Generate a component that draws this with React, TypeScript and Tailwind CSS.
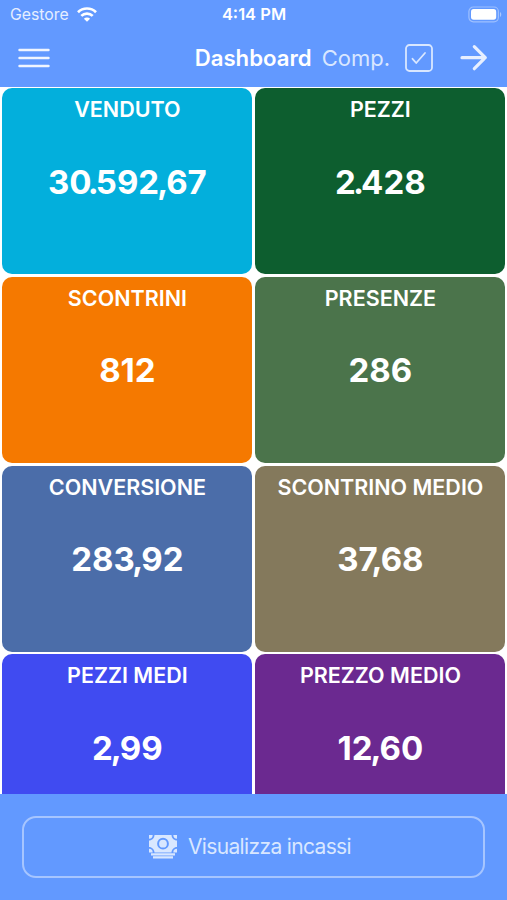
import type { ReactNode } from 'react';

interface Kpi {
  label: string;
  value: string;
  color: string;
}

const kpis: Kpi[] = [
  { label: 'VENDUTO', value: '30.592,67', color: 'bg-[#03afdc]' },
  { label: 'PEZZI', value: '2.428', color: 'bg-[#0d5e2f]' },
  { label: 'SCONTRINI', value: '812', color: 'bg-[#f57900]' },
  { label: 'PRESENZE', value: '286', color: 'bg-[#4b744b]' },
  { label: 'CONVERSIONE', value: '283,92', color: 'bg-[#4b6da9]' },
  { label: 'SCONTRINO MEDIO', value: '37,68', color: 'bg-[#84795c]' },
  { label: 'PEZZI MEDI', value: '2,99', color: 'bg-[#404bf1]' },
  { label: 'PREZZO MEDIO', value: '12,60', color: 'bg-[#6b2990]' },
];

function WifiIcon() {
  return (
    <svg width="20" height="15" viewBox="0 0 20 15" fill="none" stroke="white" strokeWidth="2.7">
      <path d="M1 5.2a12.8 12.8 0 0 1 18 0" />
      <path d="M4.3 8.9a8.1 8.1 0 0 1 11.4 0" />
      <path d="M10 14.8 6.9 11.8a4.4 4.4 0 0 1 6.2 0Z" fill="white" stroke="none" />
    </svg>
  );
}

function BatteryIcon() {
  return (
    <svg width="34" height="17" viewBox="0 0 34 17" fill="none">
      <rect x="0.9" y="1" width="29.5" height="14.8" rx="4.5" stroke="white" strokeOpacity="0.38" strokeWidth="1.2" />
      <rect x="3" y="3" width="25.2" height="10.8" rx="2.7" fill="white" />
      <path d="M32 6c1.7.7 1.7 4.2 0 4.9Z" fill="white" fillOpacity="0.45" />
    </svg>
  );
}

function CashIcon() {
  return (
    <svg width="30" height="24" viewBox="0 0 30 24" fill="#d9e7ff">
      <path d="M6.5 0h17c0 3 2.500 5.500 5.500 5.500v6.500c-3 0-5.500 2.500-5.500 5.500h-17c0-3-2.500-5.500-5.500-5.500V5.500C4 5.500 6.500 3 6.500 0Z" />
      <path d="M1 0h3.700A3.700 3.700 0 0 1 1 3.700ZM29 0h-3.700A3.700 3.700 0 0 0 29 3.700ZM1 17.500v-3.700a3.700 3.700 0 0 1 3.700 3.700ZM29 17.500v-3.700a3.700 3.700 0 0 0-3.700 3.700Z" />
      <circle cx="15" cy="8.700" r="4.900" stroke="#6299ff" strokeWidth="2" />
      <path d="M3 18.300h24v2.200H3zM5 21.200h20v2.200H5z" />
    </svg>
  );
}

// Separators sit tighter than the digits around them
function Amount({ value }: { value: string }) {
  return (
    <p className="mt-[38.3px] text-[33px] leading-[40px] font-bold">
      {value.split(/(\d[.,])/).map((part, i) => {
        if (part.endsWith('.')) return <span key={i} className="tracking-[-2.9px]">{part}</span>;
        if (part.endsWith(',')) return <span key={i} className="tracking-[-2px]">{part}</span>;
        return part;
      })}
    </p>
  );
}

function Tile({ label, value, color }: Kpi) {
  return (
    <div className={`flex h-[186px] flex-col items-center rounded-[10px] text-white ${color}`}>
      <h2 className="mt-[7px] text-[21.5px] leading-7 font-semibold whitespace-nowrap">{label}</h2>
      <Amount value={value} />
    </div>
  );
}

function BottomBar({ children }: { children: ReactNode }) {
  return <footer className="h-[106.5px] shrink-0 bg-[#6299ff] px-[22px] pt-[22.5px]">{children}</footer>;
}

export default function App() {
  return (
    <div className="flex h-[900px] w-[507px] flex-col overflow-hidden bg-white font-['Inter',sans-serif]">
      <header className="h-[87px] shrink-0 bg-[#6299ff] text-white">
        {/* Status bar */}
        <div className="grid h-[29px] grid-cols-3 items-center pr-[5px] pl-[10px]">
          <div className="flex items-center gap-[7px] text-[#e5eeff]">
            <span className="w-[60px] text-[15.8px]">Gestore</span>
            <WifiIcon />
          </div>
          <span className="pr-[4px] text-center text-[16.5px] font-semibold">4:14 PM</span>
          <div className="flex justify-end">
            <BatteryIcon />
          </div>
        </div>

        {/* Navigation bar */}
        <div className="flex h-[58px] items-center pr-[19px] pl-[18px]">
          <svg width="32" height="20" viewBox="0 0 32 20" stroke="#f0f5ff" strokeWidth="2.4" strokeLinecap="round">
            <path d="M1.500 2h29M1.500 10h29M1.500 18h29" />
          </svg>
          <h1 className="ml-auto text-[22.2px] font-semibold">Dashboard</h1>
          <span className="ml-[10px] text-[22px] text-[#d9e7ff]">Comp.</span>
          <svg className="ml-[15px]" width="28" height="28" viewBox="0 0 28 28" fill="none" stroke="#d9e7ff" strokeLinecap="round" strokeLinejoin="round">
            <rect x="1" y="1" width="26" height="26" rx="3.5" strokeWidth="1.8" />
            <path d="m7.500 14.800 3.700 4.200 8.800-10" strokeWidth="1.8" />
          </svg>
          <svg className="ml-[27px]" width="28" height="28" viewBox="0 0 28 28" fill="none" stroke="#e7efff" strokeWidth="3.2" strokeLinecap="round" strokeLinejoin="round">
            <path d="M2 13.700h23M14.300 2.700l11 11-11 11" />
          </svg>
        </div>
      </header>

      <main className="grid min-h-0 flex-1 grid-cols-[250px_250px] content-start gap-x-[3px] gap-y-[2.7px] overflow-hidden pt-[1.3px] pl-[2.4px]">
        {kpis.map((kpi) => (
          <Tile key={kpi.label} {...kpi} />
        ))}
      </main>

      <BottomBar>
        <button className="flex h-[62px] w-full items-center justify-center rounded-[14px] border-2 border-[#a6c5ff] pr-[8px] text-[21px] tracking-[-0.65px] text-[#d9e7ff]">
          <CashIcon />
          <span className="ml-[10px]">Visualizza incassi</span>
        </button>
      </BottomBar>
    </div>
  );
}
